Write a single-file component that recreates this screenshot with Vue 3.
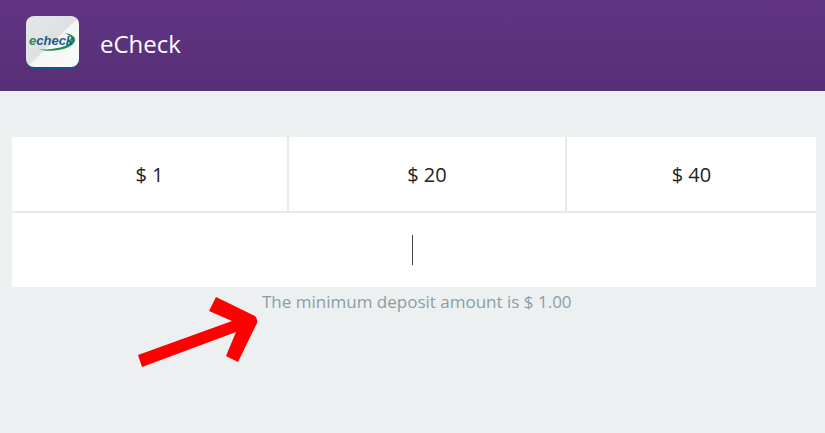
<template>
  <div class="page">
    <!-- 顶部标题栏 -->
    <header class="top-bar">
      <div class="logo">
        <svg width="53" height="53" viewBox="0 0 53 53">
          <defs>
            <linearGradient id="tile" x1="0" y1="0" x2="1" y2="1">
              <stop offset="0" stop-color="#e6e7e9" />
              <stop offset="0.5" stop-color="#dfe0e2" />
              <stop offset="0.52" stop-color="#f6f6f6" />
              <stop offset="1" stop-color="#f9f9f9" />
            </linearGradient>
          </defs>
          <rect x="0" y="2" width="53" height="51" rx="8" fill="#17508c" />
          <rect x="0" y="0" width="53" height="51" rx="8" fill="url(#tile)" />
          <path d="M13 33.5C27 37 46 33 49 25C50 21 46 18 38 17C44 19 47 22 45 25.500C42 31 27 34 13 33.500Z" fill="#1f8a4c" />
          <text x="3" y="29" class="logo-text"><tspan fill="#2a8a50">e</tspan><tspan fill="#1d5c8a">check</tspan></text>
        </svg>
      </div>
      <div class="title">eCheck</div>
    </header>

    <main class="content">
      <div class="amount-panel">
        <div class="amount-row">
          <div class="amount-cell" v-for="item in amounts" :key="item">$ {{ item }}</div>
        </div>
        <div class="input-row">
          <span class="caret"></span>
        </div>
      </div>
      <div class="hint">The minimum deposit amount is $ 1.00</div>
    </main>

    <!-- 红色箭头标注 -->
    <svg class="arrow" width="825" height="433" viewBox="0 0 825 433">
      <path d="M138 355L232 321L209 311L216 297L255 316Q258 319 257 323L238 362L226 356L236 332L142 367Z" fill="#ff0000" />
    </svg>
  </div>
</template>

<script setup>
const amounts = [1, 20, 40]
</script>

<style>
html,
body {
  margin: 0;
  padding: 0;
}
</style>

<style scoped>
.page {
  position: relative;
  width: 825px;
  height: 433px;
  overflow: hidden;
  background-color: #ecf0f1;
  font-family: "Open Sans", "Noto Sans", sans-serif;
}

.top-bar {
  height: 91px;
  box-sizing: border-box;
  padding: 16px 0 0 26px;
  display: flex;
  align-items: flex-start;
  gap: 21px;
  background: linear-gradient(to bottom, #613485, #572f75);
}

.logo {
  width: 53px;
  height: 53px;
}

.logo svg {
  display: block;
}

.logo-text {
  font-family: "Liberation Sans", sans-serif;
  font-size: 13px;
  font-weight: 700;
  font-style: italic;
}

.title {
  margin-top: 11px;
  color: #ffffff;
  font-size: 24px;
  line-height: 34px;
}

.content {
  padding: 46px 9px 0 12px;
}

.amount-panel {
  background-color: #ffffff;
}

.amount-row {
  display: grid;
  grid-template-columns: 277px 278px 1fr;
  height: 76px;
  border-bottom: 2px solid #e6eaeb;
  box-sizing: border-box;
}

.amount-cell {
  display: flex;
  align-items: center;
  justify-content: center;
  color: #222222;
  font-size: 20px;
  border-right: 2px solid #e6eaeb;
}

.amount-cell:last-child {
  border-right: none;
}

.input-row {
  height: 74px;
  display: flex;
  align-items: center;
  justify-content: center;
}

.caret {
  width: 1px;
  height: 30px;
  margin-right: 3px;
  background-color: #444444;
}

.hint {
  margin-top: 3px;
  padding-left: 250px;
  color: #8a9ea6;
  font-size: 17px;
  line-height: 24px;
}

.arrow {
  position: absolute;
  left: 0;
  top: 0;
  pointer-events: none;
}
</style>
